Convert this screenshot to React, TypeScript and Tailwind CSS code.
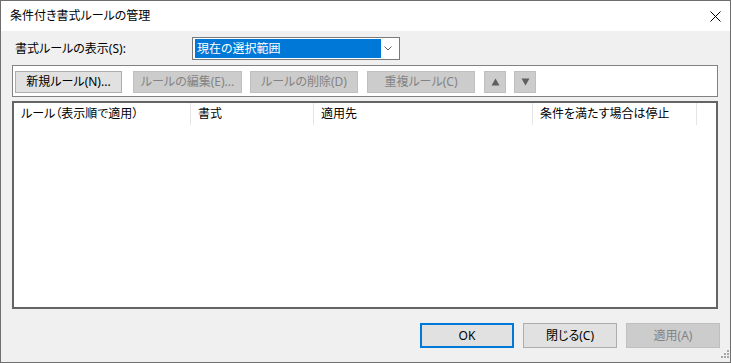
const font = "font-['Noto_Sans','Noto_Sans_CJK_JP',sans-serif] [font-feature-settings:'palt']";

function ToolButton({ label, disabled, className }: { label: string; disabled?: boolean; className?: string }) {
  return (
    <div
      className={`h-[22px] flex items-center justify-center border leading-none ${
        disabled ? "bg-[#cccccc] border-[#bfbfbf] text-[#838383]" : "bg-[#e1e1e1] border-[#adadad] text-black"
      } ${className ?? ""}`}
    >
      {label}
    </div>
  );
}

function ArrowButton({ up, className }: { up?: boolean; className?: string }) {
  return (
    <div className={`w-[22px] h-[22px] flex items-center justify-center bg-[#cccccc] border border-[#bfbfbf] ${className ?? ""}`}>
      <svg width="9" height="8" viewBox="0 0 9 8">
        {up ? <path d="M4.5 0.5 L8.5 7.5 L0.5 7.5 Z" fill="#5f5f5f" /> : <path d="M0.5 0.5 L8.5 0.5 L4.5 7.5 Z" fill="#5f5f5f" />}
      </svg>
    </div>
  );
}

function DialogButton({ label, variant }: { label: string; variant: "default" | "normal" | "disabled" }) {
  const styles = {
    default: "border-2 border-[#0078d7] bg-[#e1e1e1] text-black",
    normal: "border border-[#adadad] bg-[#e1e1e1] text-black",
    disabled: "border border-[#bfbfbf] bg-[#cccccc] text-[#838383]",
  }[variant];
  return (
    <div className={`w-[94px] h-[25px] flex items-center justify-center leading-none ${styles}`}>{label}</div>
  );
}

export default function App() {
  const columns = [
    { label: "ルール（表示順で適用）", width: "w-[177px]" },
    { label: "書式", width: "w-[123px]" },
    { label: "適用先", width: "w-[219px]" },
    { label: "条件を満たす場合は停止", width: "w-[164px]" },
  ];

  return (
    <div className={`relative w-[731px] h-[363px] bg-[#f0f0f0] border border-[#6e6e6e] flex flex-col text-[12px] text-black ${font}`}>
      {/* Title bar */}
      <div className="h-[30px] bg-white flex items-center justify-between pl-[9px] pr-[9px] shrink-0">
        <span className="leading-none">条件付き書式ルールの管理</span>
        <svg width="11" height="11" viewBox="0 0 11 11">
          <path d="M0.5 0.5 L10.5 10.5 M10.5 0.5 L0.5 10.5" stroke="#000" strokeWidth="1" />
        </svg>
      </div>

      <div className="pl-[11px] flex flex-col">
        {/* Rule display selector */}
        <div className="mt-[6px] h-[23px] flex items-center">
          <div className="w-[180px] pl-[3px] leading-none">書式ルールの表示(S):</div>
          <div className="w-[208px] h-[23px] bg-white border border-[#7a7a7a] flex items-center pl-[2px] pr-[6px]">
            <div className="w-[186px] h-[19px] bg-[#0078d7] text-white flex items-center pl-[2px] leading-none">
              現在の選択範囲
            </div>
            <svg width="8" height="5" viewBox="0 0 8 5" className="ml-auto mr-[1px]">
              <path d="M0.5 0.5 L4 4 L7.5 0.5" fill="none" stroke="#606060" strokeWidth="1" />
            </svg>
          </div>
        </div>

        {/* Toolbar */}
        <div className="mt-[5px] w-[706px] h-[32px] bg-white border border-[#828282] flex items-start pt-[5px] pl-[2px]">
          <ToolButton label="新規ルール(N)..." className="w-[107px]" />
          <ToolButton label="ルールの編集(E)..." disabled className="w-[109px] ml-[11px]" />
          <ToolButton label="ルールの削除(D)" disabled className="w-[108px] ml-[8px]" />
          <ToolButton label="重複ルール(C)" disabled className="w-[108px] ml-[9px]" />
          <ArrowButton up className="ml-[9px]" />
          <ArrowButton className="ml-[8px]" />
        </div>

        {/* Rule list */}
        <div className="mt-[4px] w-[706px] h-[208px] bg-white border-2 border-[#646464]">
          <div className="h-[22px] flex">
            {columns.map((c) => (
              <div key={c.label} className={`${c.width} h-full flex items-center pl-[7px] border-r border-[#e5e5e5] leading-none`}>
                {c.label}
              </div>
            ))}
          </div>
        </div>

        {/* Dialog buttons */}
        <div className="mt-[14px] flex justify-end gap-[9px] pr-[10px]">
          <DialogButton label="OK" variant="default" />
          <DialogButton label="閉じる(C)" variant="normal" />
          <DialogButton label="適用(A)" variant="disabled" />
        </div>
      </div>

      {/* Size grip */}
      <svg width="8" height="8" viewBox="0 0 8 8" className="absolute right-[1px] bottom-[4px]">
        <rect x="6" y="0" width="2" height="2" fill="#a8a8a8" />
        <rect x="3" y="3" width="2" height="2" fill="#a8a8a8" />
        <rect x="6" y="3" width="2" height="2" fill="#a8a8a8" />
        <rect x="0" y="6" width="2" height="2" fill="#a8a8a8" />
        <rect x="3" y="6" width="2" height="2" fill="#a8a8a8" />
        <rect x="6" y="6" width="2" height="2" fill="#a8a8a8" />
      </svg>
    </div>
  );
}
